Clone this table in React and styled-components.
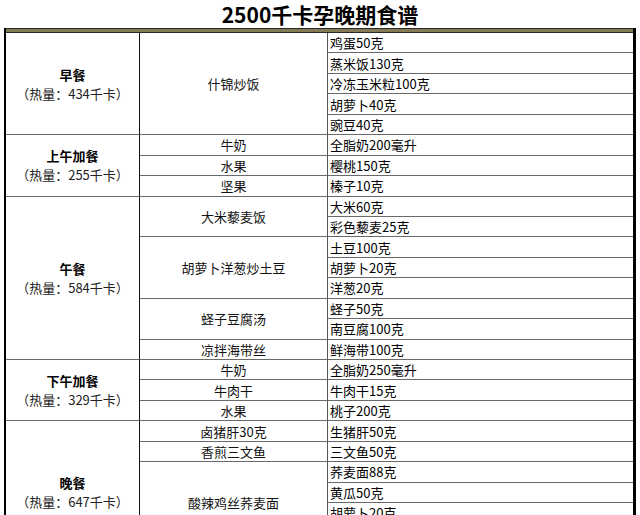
import React from "react";
import styled, { createGlobalStyle } from "styled-components";

const GlobalStyle = createGlobalStyle`
  html, body {
    margin: 0;
    padding: 0;
    background: #fff;
    overflow: hidden;
  }
  body {
    font-family: "Noto Sans CJK SC", "Noto Sans", sans-serif;
    color: #111;
  }
`;

const meals = [
  {
    name: "早餐",
    kcal: 434,
    dishes: [
      { name: "什锦炒饭", items: ["鸡蛋50克", "蒸米饭130克", "冷冻玉米粒100克", "胡萝卜40克", "豌豆40克"] },
    ],
  },
  {
    name: "上午加餐",
    kcal: 255,
    dishes: [
      { name: "牛奶", items: ["全脂奶200毫升"] },
      { name: "水果", items: ["樱桃150克"] },
      { name: "坚果", items: ["榛子10克"] },
    ],
  },
  {
    name: "午餐",
    kcal: 584,
    dishes: [
      { name: "大米藜麦饭", items: ["大米60克", "彩色藜麦25克"] },
      { name: "胡萝卜洋葱炒土豆", items: ["土豆100克", "胡萝卜20克", "洋葱20克"] },
      { name: "蛏子豆腐汤", items: ["蛏子50克", "南豆腐100克"] },
      { name: "凉拌海带丝", items: ["鲜海带100克"] },
    ],
  },
  {
    name: "下午加餐",
    kcal: 329,
    dishes: [
      { name: "牛奶", items: ["全脂奶250毫升"] },
      { name: "牛肉干", items: ["牛肉干15克"] },
      { name: "水果", items: ["桃子200克"] },
    ],
  },
  {
    name: "晚餐",
    kcal: 647,
    dishes: [
      { name: "卤猪肝30克", items: ["生猪肝50克"] },
      { name: "香煎三文鱼", items: ["三文鱼50克"] },
      { name: "酸辣鸡丝荞麦面", items: ["荞麦面88克", "黄瓜50克", "胡萝卜20克", "鸡胸肉50克"] },
      { name: "清炒菜心", items: ["菜心150克"] },
    ],
  },
];

export default function App() {
  return (
    <>
      <GlobalStyle />
      <Page>
        <Title>2500千卡孕晚期食谱</Title>
        <Sheet>
          <TopRule />
          {meals.map((meal) => (
            <Meal key={meal.name}>
              <MealLabel>
                <MealName>{meal.name}</MealName>
                <Kcal>（热量：{meal.kcal}千卡）</Kcal>
              </MealLabel>
              <Dishes>
                {meal.dishes.map((dish, i) => (
                  <Dish key={i}>
                    <DishName>{dish.name}</DishName>
                    <Items>
                      {dish.items.map((item) => (
                        <Item key={item}>{item}</Item>
                      ))}
                    </Items>
                  </Dish>
                ))}
              </Dishes>
            </Meal>
          ))}
        </Sheet>
      </Page>
    </>
  );
}

const Page = styled.div`
  width: 640px;
`;

const Title = styled.h1`
  margin: 0;
  height: 28px;
  line-height: 28px;
  text-align: center;
  font-size: 21px;
  font-weight: 700;
  color: #000;
`;

const Sheet = styled.div`
  margin-left: 4px;
  width: 632px;
  box-sizing: border-box;
  border-left: 2px solid #000;
  border-right: 3px solid #000;
`;

const TopRule = styled.div`
  height: 3px;
  background: #857a56;
  border-top: 1px solid #2a2a2a;
  border-bottom: 1px solid #2a2a2a;
`;

const Meal = styled.div`
  display: flex;
`;

const MealLabel = styled.div`
  width: 134px;
  box-sizing: border-box;
  border-right: 1px solid #111;
  border-bottom: 1px solid #6a6a6a;
  display: flex;
  flex-direction: column;
  align-items: center;
  justify-content: center;
  font-size: 13px;
  line-height: 19px;
`;

const MealName = styled.div`
  font-weight: 700;
  color: #000;
`;

const Kcal = styled.div`
  color: #222;
`;

const Dishes = styled.div`
  flex: 1;
  display: flex;
  flex-direction: column;
`;

const Dish = styled.div`
  display: flex;
`;

const DishName = styled.div`
  width: 188px;
  box-sizing: border-box;
  border-right: 1px solid #555;
  border-bottom: 1px solid #6a6a6a;
  display: flex;
  align-items: center;
  justify-content: center;
  font-size: 13px;
  color: #111;
`;

const Items = styled.div`
  flex: 1;
  display: flex;
  flex-direction: column;
`;

const Item = styled.div`
  height: 20.45px;
  box-sizing: border-box;
  border-bottom: 1px solid #6a6a6a;
  padding-left: 2px;
  display: flex;
  align-items: center;
  font-size: 13px;
  color: #000;
  white-space: nowrap;
`;
